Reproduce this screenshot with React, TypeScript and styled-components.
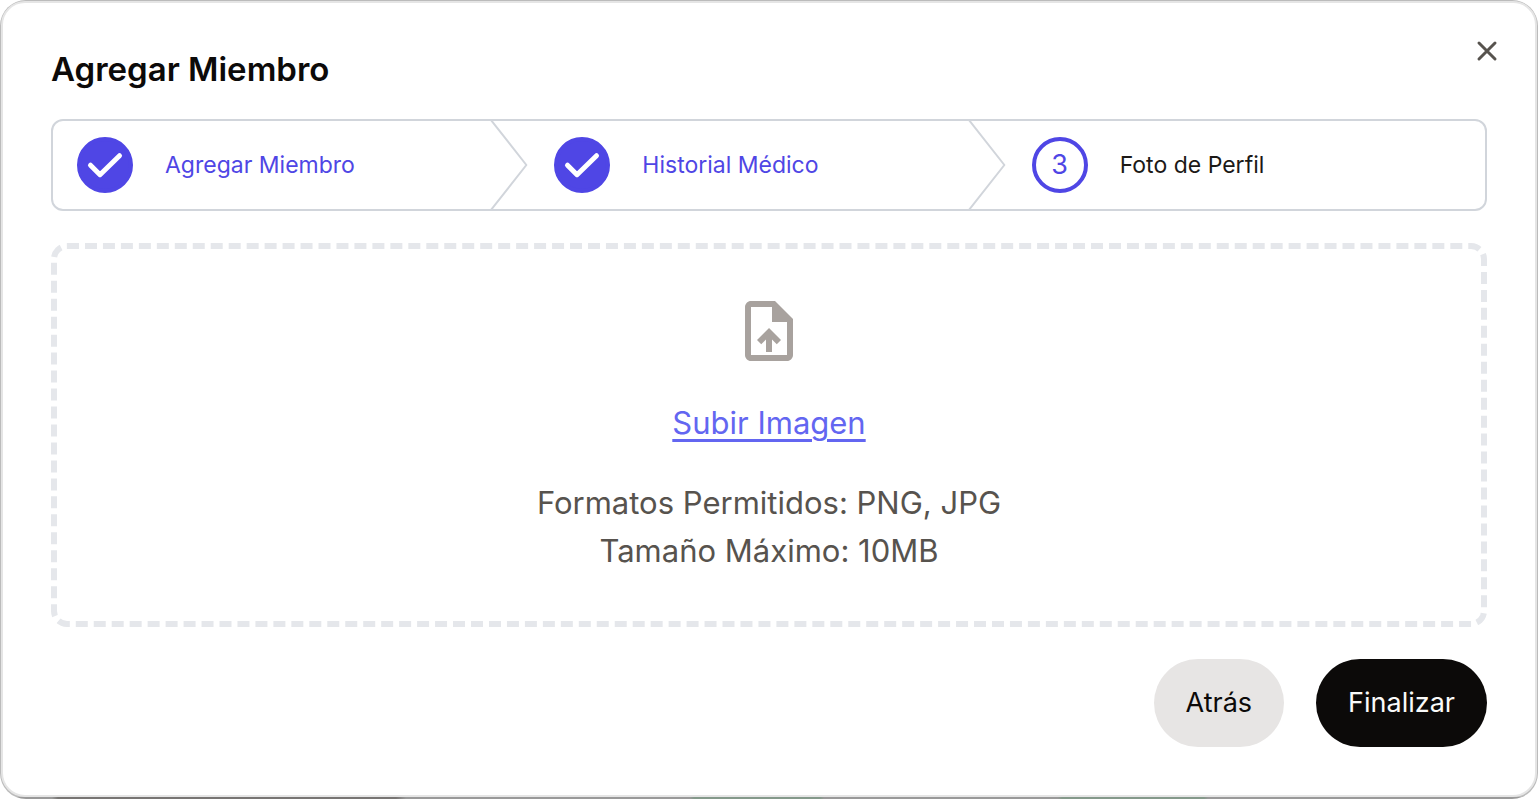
import React from "react";
import styled, { createGlobalStyle, css } from "styled-components";
import { MdOutlineUploadFile } from "react-icons/md";

const GlobalStyle = createGlobalStyle`
  *, *::before, *::after { box-sizing: border-box; }
  html, body, #root { height: 100%; }
  body {
    margin: 0;
    background: #ffffff;
    color: #0c0a09;
    font-family: Inter, "Liberation Sans", sans-serif;
  }
  button { font: inherit; border: 0; cursor: pointer; }
`;

const Backdrop = styled.div`
  display: flex;
  min-height: 100%;
  padding: 1px 1px 2px;
  border-radius: 26px;
  background:
    linear-gradient(90deg, #999999 52px, #777573 58px, #777573 396px, #999999 406px, #999999 690px,
      #84998a 694px, #84998a 820px, #999999 824px, #999999 1058px, #84998a 1062px,
      #84998a 1204px, #999999 1208px) bottom / 100% 2px no-repeat,
    #bbbbbb;
`;

const Dialog = styled.section`
  position: relative;
  flex: 1;
  display: flex;
  flex-direction: column;
  gap: 32px;
  padding: 48px;
  border: 2px solid #e5e5e5;
  border-radius: 24px;
  background: #ffffff;
`;

const Title = styled.h1`
  margin: 0;
  font-size: 33px;
  line-height: 36px;
  font-weight: 600;
`;

const CloseButton = styled.button`
  position: absolute;
  top: 32px;
  right: 32px;
  display: flex;
  padding: 0;
  background: none;
  color: #57534e;
`;

const Steps = styled.ol`
  display: flex;
  margin: 0;
  padding: 0;
  list-style: none;
  border: 2px solid #d1d5db;
  border-radius: 12px;
`;

const Step = styled.li<{ $done?: boolean }>`
  position: relative;
  flex: 1;
  display: flex;
  align-items: center;
  gap: 32px;
  padding: 16px 24px;
  font-size: 23px;
  line-height: 40px;
  color: ${(p) => (p.$done ? "#4f46e5" : "#1c1917")};
`;

const StepMark = styled.span<{ $done?: boolean }>`
  display: flex;
  align-items: center;
  justify-content: center;
  width: 56px;
  height: 56px;
  border: 4px solid #4f46e5;
  border-radius: 50%;
  font-size: 27px;
  color: #4f46e5;
  ${(p) => p.$done && css`background: #4f46e5; color: #ffffff;`}
`;

const StepDivider = styled.svg`
  position: absolute;
  top: 0;
  right: 0;
  width: 40px;
  height: 100%;
  color: #d1d5db;
`;

const DropZone = styled.div`
  display: flex;
  flex-direction: column;
  align-items: center;
  justify-content: center;
  gap: 32px;
  min-height: 384px;
  border: 6px dashed #e5e7eb;
  border-radius: 16px;
  font-size: 31px;
  line-height: 48px;
  text-align: center;
  color: #57534e;
`;

const UploadIcon = styled(MdOutlineUploadFile)`
  color: #a8a29e;
`;

const UploadLink = styled.a`
  color: #6366f1;
  text-decoration: underline;
  text-decoration-thickness: 3px;
  text-underline-offset: 5px;
`;

const Hint = styled.p`
  margin: 0;
`;

const Actions = styled.div`
  display: flex;
  justify-content: flex-end;
  gap: 32px;
`;

const ActionButton = styled.button<{ $primary?: boolean }>`
  height: 88px;
  padding: 0 32px;
  border-radius: 44px;
  font-size: 27px;
  line-height: 40px;
  background: ${(p) => (p.$primary ? "#0c0a09" : "#e7e5e4")};
  color: ${(p) => (p.$primary ? "#fafaf9" : "#0c0a09")};
`;

const steps = [
  { label: "Agregar Miembro", done: true },
  { label: "Historial Médico", done: true },
  { label: "Foto de Perfil", done: false },
];

const CheckIcon = () => (
  <svg width="48" height="48" viewBox="0 0 48 48" fill="none" aria-hidden="true">
    <path d="M9.5 24.2L19 33.7L38.5 14.7" stroke="currentColor" strokeWidth="5" strokeLinecap="round" strokeLinejoin="round" />
  </svg>
);

export default function App() {
  return (
    <>
      <GlobalStyle />
      <Backdrop>
        <Dialog role="dialog" aria-labelledby="dialog-title">
          <Title id="dialog-title">Agregar Miembro</Title>
          <CloseButton type="button" aria-label="Cerrar">
            <svg width="32" height="32" viewBox="0 0 32 32" fill="none" aria-hidden="true">
              <path d="M8 8L24 24M24 8L8 24" stroke="currentColor" strokeWidth="3" strokeLinecap="round" />
            </svg>
          </CloseButton>
          <Steps>
            {steps.map((step, i) => (
              <Step key={step.label} $done={step.done} aria-current={step.done ? undefined : "step"}>
                <StepMark $done={step.done}>{step.done ? <CheckIcon /> : i + 1}</StepMark>
                <span>{step.label}</span>
                {i < steps.length - 1 && (
                  <StepDivider viewBox="0 0 22 80" fill="none" preserveAspectRatio="none" aria-hidden="true">
                    <path d="M0 -2L20 40L0 82" stroke="currentColor" strokeWidth="2" strokeLinejoin="round" vectorEffect="non-scaling-stroke" />
                  </StepDivider>
                )}
              </Step>
            ))}
          </Steps>
          <DropZone>
            <UploadIcon size={72} aria-hidden="true" />
            <UploadLink href="#subir">Subir Imagen</UploadLink>
            <Hint>
              Formatos Permitidos: PNG, JPG
              <br />
              Tamaño Máximo: 10MB
            </Hint>
          </DropZone>
          <Actions>
            <ActionButton type="button">Atrás</ActionButton>
            <ActionButton type="button" $primary>Finalizar</ActionButton>
          </Actions>
        </Dialog>
      </Backdrop>
    </>
  );
}
